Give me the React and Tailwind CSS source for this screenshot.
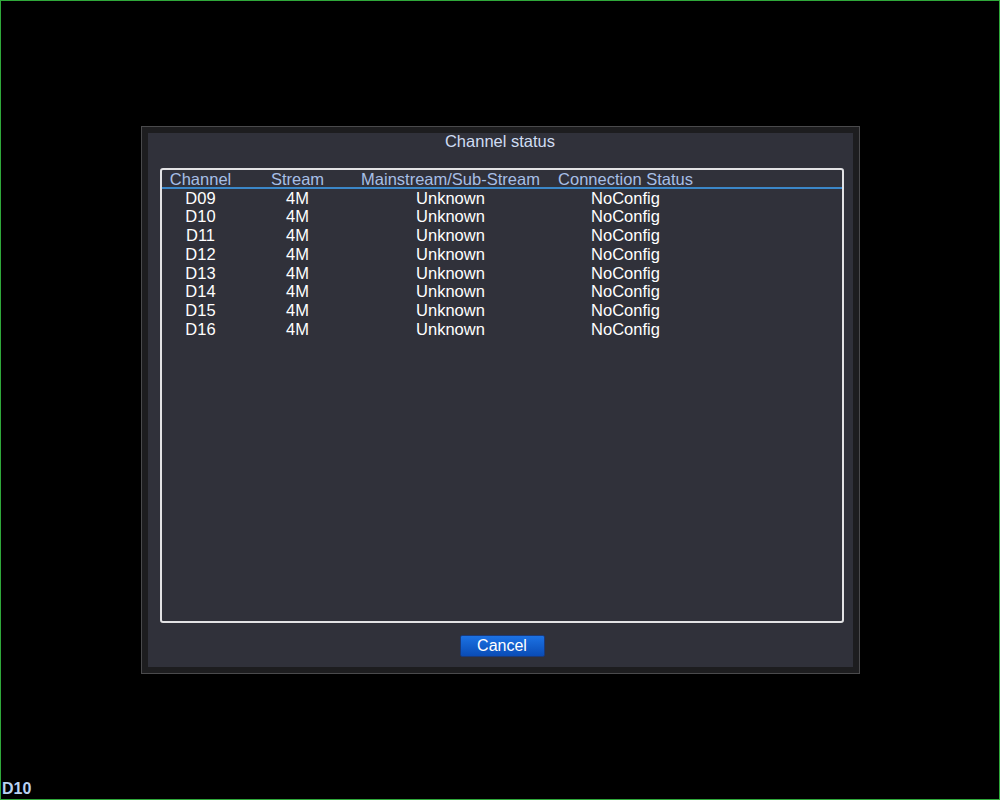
const rows = ["D09", "D10", "D11", "D12", "D13", "D14", "D15", "D16"];

const cols = [
  { title: "Channel", w: "w-[78px]" },
  { title: "Stream", w: "w-[116px]" },
  { title: "Mainstream/Sub-Stream", w: "w-[190px]" },
  { title: "Connection Status", w: "w-[160px]" },
];

function App() {
  return (
    <div
      className="relative w-[1000px] h-[800px] bg-black border border-[#2fa83a] flex items-center justify-center"
      style={{ fontFamily: '"Liberation Sans", Arial, sans-serif' }}
    >
      <div className="mt-[-1px] border border-[#4a4a4c] bg-[#1d1d1f] p-[6px]">
        <div className="w-[705px] h-[534px] bg-[#30313a] flex flex-col">
          <div className="h-[18px] mt-[-1px] text-center text-[16.5px] leading-[18px] text-[#cfdcf2]">Channel status</div>

          <div className="mt-[18px] ml-[12px] w-[684px] h-[455px] border-2 border-[#e2e2e4] rounded-[3px] flex flex-col">
            <div className="flex h-[17px] text-[16.5px] leading-[18px] text-[#a7bfe6]">
              {cols.map((c) => (
                <div key={c.title} className={`${c.w} text-center whitespace-nowrap`}>
                  {c.title}
                </div>
              ))}
            </div>
            <div className="h-[2px] bg-[#3b87c8]" />
            <div className="flex flex-col text-[16.5px] text-white">
              {rows.map((r) => (
                <div key={r} className="flex h-[18.8px] leading-[18.8px]">
                  <div className="w-[78px] text-center">{r}</div>
                  <div className="w-[116px] text-center">4M</div>
                  <div className="w-[190px] text-center">Unknown</div>
                  <div className="w-[160px] text-center">NoConfig</div>
                </div>
              ))}
            </div>
          </div>

          <div className="flex justify-center mt-[12px] pl-[4px]">
            <button className="w-[85px] h-[22px] border border-[#1a3a7a] rounded-[2px] bg-gradient-to-b from-[#1c72e4] to-[#0a4cb6] text-white text-[16px] leading-[20px]">
              Cancel
            </button>
          </div>
        </div>
      </div>

      <div className="absolute left-[1px] bottom-[1px] text-[16px] font-bold leading-[18px] text-[#b9d2f2]">D10</div>
    </div>
  );
}

export default App;
